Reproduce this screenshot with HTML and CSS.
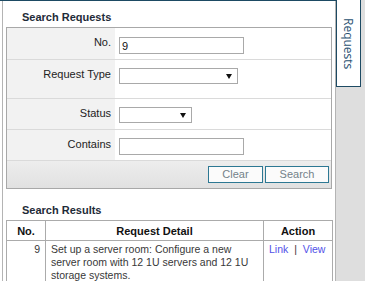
FILE: index.html
```html
<!DOCTYPE html>
<html lang="en">
<head>
    <meta charset="UTF-8">
    <meta name="viewport" content="width=device-width, initial-scale=1.0">
    <title>Search Requests</title>
    <link rel="stylesheet" href="styles.css">
</head>
<body>
    <div class="page">
        <div class="main">
            <div class="content">
                <h3 class="section-title">Search Requests</h3>

                <form class="search-box">
                    <div class="field-row row-no">
                        <label class="field-label" for="reqNo">No.</label>
                        <div class="field-input"><input type="text" id="reqNo" class="text-input" value="9"></div>
                    </div>
                    <div class="field-row row-type">
                        <label class="field-label" for="reqType">Request Type</label>
                        <div class="field-input">
                            <span class="select-wrap"><select id="reqType" class="select type-select"><option></option></select></span>
                        </div>
                    </div>
                    <div class="field-row">
                        <label class="field-label" for="reqStatus">Status</label>
                        <div class="field-input">
                            <span class="select-wrap"><select id="reqStatus" class="select status-select"><option></option></select></span>
                        </div>
                    </div>
                    <div class="field-row">
                        <label class="field-label" for="reqText">Contains</label>
                        <div class="field-input"><input type="text" id="reqText" class="text-input"></div>
                    </div>
                    <div class="button-row">
                        <button type="button" class="btn btn-clear">Clear</button>
                        <button type="button" class="btn btn-search">Search</button>
                    </div>
                </form>

                <h3 class="section-title results-title">Search Results</h3>

                <table class="results">
                    <colgroup>
                        <col class="col-no">
                        <col class="col-detail">
                        <col class="col-action">
                    </colgroup>
                    <tr>
                        <th>No.</th>
                        <th>Request Detail</th>
                        <th>Action</th>
                    </tr>
                    <tr>
                        <td class="cell-no">9</td>
                        <td class="cell-detail">Set up a server room: Configure a new server room with 12 1U servers and 12 1U storage systems.</td>
                        <td class="cell-action"><a href="#">Link</a> <span class="sep">|</span> <a href="#">View</a></td>
                    </tr>
                </table>
            </div>
        </div>
        <div class="side">
            <div class="tab">Requests</div>
        </div>
    </div>
</body>
</html>
```

FILE: styles.css
```css
body {
    margin: 0;
    font-family: "Liberation Sans", Arial, sans-serif;
    background: #fff;
    overflow: hidden;
}
.page {
    display: flex;
    height: 281px;
}
.main {
    width: 336px;
    padding-left: 2px;
    box-sizing: border-box;
    border-top: 1px solid #1d4a63;
}
.content {
    height: 100%;
    border-left: 1px solid #b4b4b4;
    border-right: 1px solid #b4b4b4;
}
.section-title {
    margin: 0;
    padding: 10px 0 3px 19px;
    font-size: 11px;
    line-height: 13px;
    font-weight: bold;
    color: #1e2b38;
}
.results-title {
    padding-top: 15px;
    padding-bottom: 3px;
}
.search-box {
    width: 326px;
    margin: 0 0 0 3px;
    box-sizing: border-box;
    border: 1px solid #a8a8a8;
}
.field-row {
    display: grid;
    grid-template-columns: 108px 1fr;
    height: 31px;
    border-bottom: 1px solid #dadada;
    box-sizing: border-box;
}
.row-no {
    height: 32px;
}
.row-type {
    height: 39px;
}
.field-label {
    background: #f2f2f2;
    text-align: right;
    padding: 8px 4px 0 0;
    font-size: 11px;
    line-height: 13px;
    color: #222;
}
.field-input {
    padding: 8px 0 0 4px;
}
.row-no .field-input {
    padding-top: 9px;
}
.text-input {
    display: block;
    width: 125px;
    height: 17px;
    box-sizing: border-box;
    border: 1px solid #a9a9a9;
    padding: 0 2px;
    margin: 0;
    font-family: "Liberation Sans", Arial, sans-serif;
    font-size: 11px;
    color: #111;
    outline: none;
}
.select-wrap {
    position: relative;
    display: block;
    width: max-content;
}
.select-wrap::after {
    content: "";
    position: absolute;
    right: 6px;
    top: 6px;
    border-left: 3px solid transparent;
    border-right: 3px solid transparent;
    border-top: 5px solid #111;
    pointer-events: none;
}
.select {
    display: block;
    -webkit-appearance: none;
    appearance: none;
    height: 16px;
    box-sizing: border-box;
    border: 1px solid #a9a9a9;
    border-radius: 0;
    background: #fff;
    margin: 0;
    padding: 0;
    font-size: 11px;
}
.type-select {
    width: 119px;
}
.status-select {
    width: 73px;
}
.button-row {
    display: flex;
    justify-content: flex-end;
    gap: 2px;
    height: 27px;
    box-sizing: border-box;
    padding: 5px 2px 0 0;
    background: linear-gradient(#ededed, #e1e1e1);
}
.btn {
    height: 17px;
    box-sizing: border-box;
    border: 1px solid #2d7893;
    background: #fbfbfb;
    color: #748289;
    font-family: "Liberation Sans", Arial, sans-serif;
    font-size: 11px;
    line-height: 13px;
    padding: 0;
    margin: 0;
}
.btn-clear {
    width: 55px;
}
.btn-search {
    width: 64px;
}
.results {
    width: 326px;
    margin-left: 3px;
    border-collapse: collapse;
    table-layout: fixed;
}
.col-no {
    width: 39px;
}
.col-detail {
    width: 218px;
}
.col-action {
    width: 69px;
}
.results th,
.results td {
    border: 1px solid #ababab;
    padding: 0;
}
.results th {
    height: 16px;
    padding: 2px 0 1px;
    font-size: 11px;
    line-height: 13px;
    color: #111;
    text-align: center;
    font-weight: bold;
}
.results td {
    vertical-align: top;
    font-size: 10.5px;
    line-height: 13px;
    color: #383838;
    height: 41px;
    box-sizing: border-box;
}
.cell-no {
    text-align: right;
    padding: 2px 5px 0 0 !important;
}
.cell-detail {
    padding: 2px 5px 0 5px !important;
}
.cell-action {
    padding: 2px 0 0 5px !important;
    color: #445;
}
.cell-action a {
    color: #5252e8;
    text-decoration: none;
}
.cell-action .sep {
    margin: 0 3px;
}
.side {
    flex: 1;
    background: #dedede;
}
.tab {
    width: 25px;
    height: 87px;
    box-sizing: border-box;
    background: #fff;
    border: 1px solid #1d4a63;
    border-top: none;
    writing-mode: vertical-rl;
    padding-top: 18px;
    padding-right: 5px;
    font-family: "Open Sans", sans-serif;
    font-size: 12px;
    line-height: 13px;
    color: #2a5272;
}
```
